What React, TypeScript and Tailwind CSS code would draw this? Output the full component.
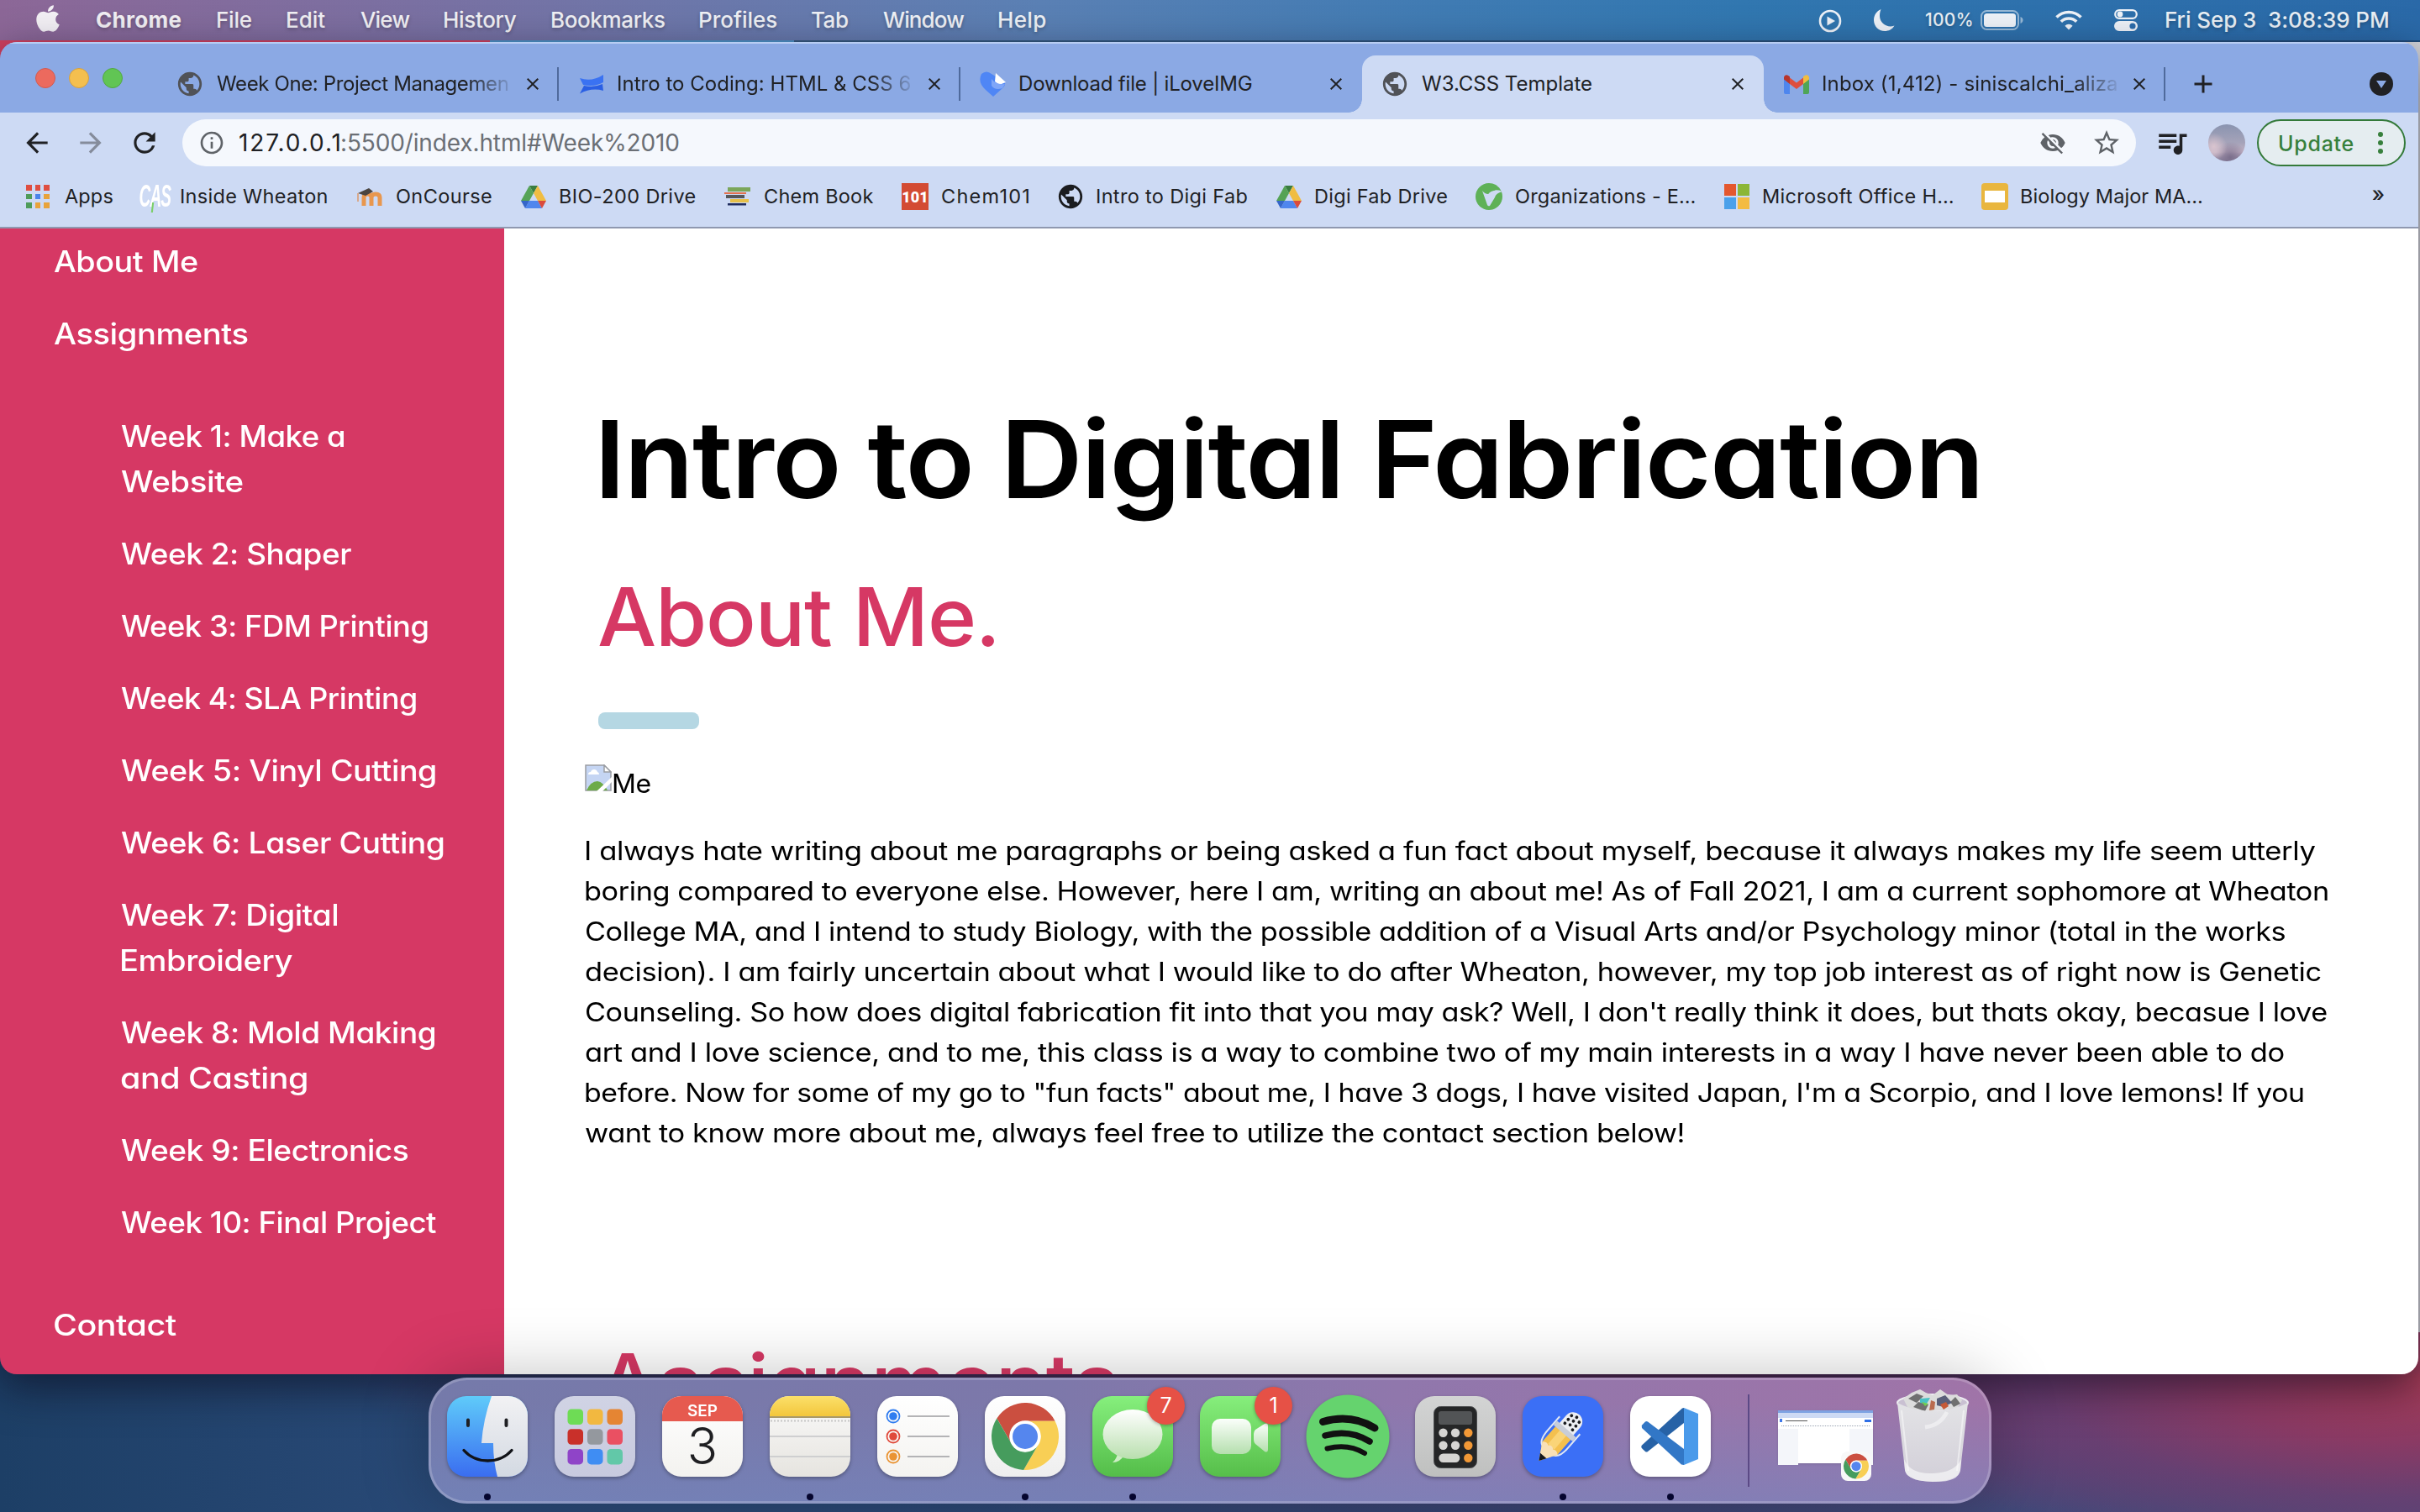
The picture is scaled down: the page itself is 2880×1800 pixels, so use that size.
import { useLayoutEffect, useRef, useState, type ReactNode } from "react";
import { FaApple } from "react-icons/fa";
import {
  MdPublic,
  MdClose,
  MdArrowBack,
  MdArrowForward,
  MdRefresh,
  MdInfoOutline,
  MdVisibilityOff,
  MdStarBorder,
  MdQueueMusic,
  MdAdd,
} from "react-icons/md";

/*
 * One line of text whose ink spans exactly `w` pixels: by tracking,
 * or, with `wide`, by stretching the letters themselves.
 */
function Fit({ children, w, wide = false, className = "" }: { children: string; w: number; wide?: boolean; className?: string }) {
  const ref = useRef<HTMLSpanElement>(null);
  const [fit, setFit] = useState({ spacing: 0, left: 0, scale: 1 });
  useLayoutEffect(() => {
    const el = ref.current;
    if (!el) return;
    const cs = getComputedStyle(el);
    const ctx = document.createElement("canvas").getContext("2d");
    if (!ctx) return;
    ctx.font = `${cs.fontWeight} ${cs.fontSize} ${cs.fontFamily}`;
    const m = ctx.measureText(children);
    const lsb = -m.actualBoundingBoxLeft;
    const rsb = m.width - m.actualBoundingBoxRight;
    el.style.letterSpacing = "0px";
    const natural = el.offsetWidth;
    const gaps = Math.max(1, children.length - 1);
    const ink = natural - lsb - rsb;
    if (wide) {
      const spacing = -0.012 * parseFloat(cs.fontSize);
      const scale = w / (ink + spacing * gaps);
      el.style.letterSpacing = `${spacing}px`;
      setFit({ spacing, left: -lsb * scale, scale });
    } else {
      const spacing = (w - ink) / gaps;
      el.style.letterSpacing = `${spacing}px`;
      setFit({ spacing, left: -lsb, scale: 1 });
    }
  }, [children, w, wide]);
  return (
    <span className={`block shrink-0 whitespace-pre ${className}`} style={{ width: w }}>
      <span
        ref={ref}
        className="inline-block origin-left"
        style={{
          letterSpacing: fit.spacing,
          marginLeft: fit.left,
          transform: fit.scale === 1 ? undefined : `scaleX(${fit.scale})`,
        }}
      >
        {children}
      </span>
    </span>
  );
}

/* ---------- Menu bar ---------- */

const menus: [string, number][] = [
  ["File", 41],
  ["Edit", 45],
  ["View", 58],
  ["History", 86],
  ["Bookmarks", 134],
  ["Profiles", 91],
  ["Tab", 43],
  ["Window", 96],
  ["Help", 55],
];

function MenuBar() {
  return (
    <header className="flex h-12 shrink-0 items-center bg-[linear-gradient(90deg,#8c6797_0%,#7a70a2_17%,#5a80b4_43%,#3f7bb3_60%,#3177b0_72%,#2a69a8_100%)] pl-[43px] pr-[38px] text-[26px] leading-[48px] text-white/90 [text-shadow:0_2px_4px_rgba(0,0,0,0.25)]">
      <FaApple className="-mt-1 h-[36px] w-[28px]" preserveAspectRatio="none" />
      <Fit w={101} className="ml-11 font-bold">Chrome</Fit>
      <nav className="ml-[43px] flex gap-[42px] font-medium">
        {menus.map(([t, w]) => (
          <Fit key={t} w={w}>{t}</Fit>
        ))}
      </nav>
      <div className="ml-auto flex items-center">
        <svg className="mt-0.5 h-7 w-7" viewBox="0 0 28 28" fill="none">
          <circle cx="14" cy="14" r="12" stroke="#eef2f8" strokeWidth="2.6" />
          <path d="M10.500 8.500V19.500L20 14Z" fill="#eef2f8" />
        </svg>
        <svg className="ml-[37px] h-7 w-[26px]" viewBox="0 0 26 28">
          <path d="M9.500 1C7 7 7.500 14 12 18c4 3.600 9 4.300 13.500 2.500C23 25 18.500 27 14 27 6.500 27 1 21 1 14 1 8 4.500 3 9.500 1Z" fill="#eef2f8" />
        </svg>
        <Fit w={56} className="ml-[36px] text-[21px] font-medium">100%</Fit>
        <svg className="ml-2.5 h-6 w-[51px]" viewBox="0 0 51 24" fill="none">
          <rect x="1" y="1" width="44" height="22" rx="6.500" stroke="#fff" strokeOpacity=".5" strokeWidth="2" />
          <rect x="4" y="4" width="38" height="16" rx="3.500" fill="#eef2f8" />
          <path d="M47.500 8c2 .8 3 2.200 3 4s-1 3.200-3 4Z" fill="#fff" fillOpacity=".5" />
        </svg>
        <svg className="ml-[38px] h-6 w-8" viewBox="0 0 32 24" fill="none" stroke="#eef2f8">
          <path d="M1.500 8.500a20.500 20.500 0 0 1 29 0" strokeWidth="3.600" />
          <path d="M6.800 13.800a13 13 0 0 1 18.400 0" strokeWidth="3.600" />
          <path d="M16 23.500l-4.600-4.800a6.500 6.500 0 0 1 9.200 0Z" fill="#eef2f8" stroke="none" />
        </svg>
        <svg className="ml-[38px] h-7 w-7" viewBox="0 0 28 28" fill="none">
          <rect x="1.200" y="2.200" width="25.600" height="9.600" rx="4.800" stroke="#eef2f8" strokeWidth="2.200" />
          <circle cx="7" cy="7" r="3.400" fill="#eef2f8" />
          <rect y="15" width="28" height="12" rx="6" fill="#eef2f8" />
          <circle cx="22" cy="21" r="3.600" fill="#2c6cab" />
        </svg>
        <Fit w={264} className="-mt-px ml-[34px] font-medium">{"Fri Sep 3  3:08:39 PM"}</Fit>
      </div>
    </header>
  );
}

/* ---------- Tab strip ---------- */

function DownloadIcon() {
  return (
    <svg className="h-[30px] w-8" viewBox="0 0 32 30">
      <path d="M2 3Q8-2 14 3L30 13Q31 17 26 21L16 30 7 22Q-3 13 2 3Z" fill="#4f86f5" />
      <path d="M19 2l12 11-8 3-5-4Z" fill="#fff" />
      <path d="M14 9q5 7 16 6l-3 5q-9 3-13-3Z" fill="#7fa6f8" />
    </svg>
  );
}

function ConfluenceIcon() {
  return (
    <svg className="h-[23px] w-7" viewBox="0 0 28 23">
      <path d="M0 4Q14 9 28 0V9Q17 15 4 12Z" fill="#3a72f2" />
      <path d="M5 13Q17 15.500 27 11L28 19Q14 15 0 22.500Z" fill="#2a5fe4" />
    </svg>
  );
}

function GmailIcon() {
  return (
    <svg className="h-[23px] w-[30px]" viewBox="0 0 30 23">
      <path d="M0 5v16a2 2 0 0 0 2 2h5V10Z" fill="#4e86ee" />
      <path d="M30 5v16a2 2 0 0 1-2 2h-5V10Z" fill="#4fa557" />
      <path d="M7 3.500l8 6 8-6V11l-8 6-8-6Z" fill="#de4e3e" />
      <path d="M0 3.500C0 .5 3-.8 5.300 1L7 2.300V11L0 5.500Z" fill="#b8352b" />
      <path d="M30 3.500C30 .5 27-.8 24.700 1L23 2.300V11l7-5.500Z" fill="#f1bd41" />
    </svg>
  );
}

type TabInfo = { title: string; w: number; icon: ReactNode; active?: boolean; divider?: boolean };

const tabs: TabInfo[] = [
  { title: "Week One: Project Managemen", w: 347, icon: <MdPublic className="size-[34px] text-[#505257]" />, divider: true },
  { title: "Intro to Coding: HTML & CSS 6", w: 348, icon: <ConfluenceIcon />, divider: true },
  { title: "Download file | iLoveIMG", w: 276, icon: <DownloadIcon /> },
  { title: "W3.CSS Template", w: 202, icon: <MdPublic className="size-[34px] text-[#505257]" />, active: true },
  { title: "Inbox (1,412) - siniscalchi_aliza", w: 349, icon: <GmailIcon />, divider: true },
];

function Tab({ tab }: { tab: TabInfo }) {
  return (
    <div
      className={`relative flex h-[68px] w-[478px] items-center pl-[25px] ${
        tab.active ? "rounded-t-[16px] bg-[#cddaf4]" : ""
      }`}
    >
      {tab.active && (
        <>
          <span className="absolute bottom-0 -left-4 size-4 bg-[radial-gradient(circle_at_0_0,transparent_15.500px,#cddaf4_16px)]" />
          <span className="absolute bottom-0 -right-4 size-4 bg-[radial-gradient(circle_at_100%_0,transparent_15.500px,#cddaf4_16px)]" />
        </>
      )}
      <span className="flex w-7 items-center justify-center [&>svg]:shrink-0">{tab.icon}</span>
      <div
        className={`ml-[18px] w-[352px] ${
          tab.w > 300 ? "[mask-image:linear-gradient(90deg,#000_85%,transparent_101%)]" : ""
        }`}
      >
        <Fit w={tab.w} className="text-[24px] leading-9 text-[#202124]">{tab.title}</Fit>
      </div>
      <MdClose className="ml-3 size-6 text-[#202124]" />
      {tab.divider && <span className="ml-auto h-10 w-0.5 bg-[#4f6a9c]" />}
    </div>
  );
}

function TabStrip() {
  return (
    <div className="flex h-[84px] shrink-0 items-end border-t-2 border-[#b8cdf2] bg-[#8ba9e4] pl-[42px]">
      <div className="flex h-[82px] w-[145px] gap-4 pt-[29px]">
        <span className="size-6 rounded-full border border-[#d05a50] bg-[#ec6a5e]" />
        <span className="size-6 rounded-full border border-[#d6a13f] bg-[#f4bf4f]" />
        <span className="size-6 rounded-full border border-[#52a842] bg-[#61c554]" />
      </div>
      {tabs.map((t) => (
        <Tab key={t.title} tab={t} />
      ))}
      <div className="flex h-[68px] grow items-center justify-between pl-[27px] pr-[30px]">
        <MdAdd className="size-9 text-[#202124]" />
        <svg className="size-7" viewBox="0 0 28 28">
          <circle cx="14" cy="14" r="14" fill="#202124" />
          <path d="M8 10h12l-6 9Z" fill="#8ba9e4" />
        </svg>
      </div>
    </div>
  );
}

/* ---------- Toolbar ---------- */

function Toolbar() {
  return (
    <div className="flex h-[72px] shrink-0 items-center bg-[#cddaf4] pl-[25px] pr-[15px]">
      <MdArrowBack className="size-[38px] text-[#202124]" />
      <MdArrowForward className="ml-[26px] size-[38px] text-[#858c9b]" />
      <MdRefresh className="ml-[26px] size-[38px] text-[#202124]" />
      <div className="ml-[26px] flex h-14 w-[2325px] items-center rounded-full bg-[#f5f8fd] pl-[19px] pr-[17px] text-[28px]">
        <MdInfoOutline className="size-8 text-[#5f6368]" />
        <Fit w={118} className="ml-[17px] text-[#202124]">127.0.0.1</Fit>
        <Fit w={400} className="ml-1 text-[#6b6f75]">:5500/index.html#Week%2010</Fit>
        <MdVisibilityOff className="ml-auto size-8 text-[#5f6368]" />
        <MdStarBorder className="ml-[30px] size-[36px] text-[#5f6368]" />
      </div>
      <MdQueueMusic className="ml-[22px] size-[42px] text-[#202124]" />
      <span className="ml-[22px] size-11 rounded-full bg-[radial-gradient(circle_at_15%_60%,#d9c4cf_0,transparent_35%),radial-gradient(circle_at_60%_90%,#7b6f8c_0,transparent_40%),linear-gradient(180deg,#8a94b0_0%,#a5a3b9_50%,#c3b2c4_75%,#857c98_100%)]" />
      <div className="ml-3.5 flex h-14 w-[177px] items-center rounded-full border-2 border-[#347a3a] bg-[#e5edf0] pl-[25px]">
        <Fit w={88} className="mt-0.5 text-[25px] font-medium leading-none text-[#37803c]">Update</Fit>
        <span className="ml-[29px] flex flex-col gap-1">
          <i className="size-1.5 rounded-full bg-[#37803c]" />
          <i className="size-1.5 rounded-full bg-[#37803c]" />
          <i className="size-1.5 rounded-full bg-[#37803c]" />
        </span>
      </div>
    </div>
  );
}

/* ---------- Bookmarks ---------- */

const appColors = ["#df4e41", "#df4e41", "#df4e41", "#4f9c5a", "#4a84ea", "#e8a33b", "#4f9c5a", "#e8a33b", "#e8a33b"];

function AppsIcon() {
  return (
    <span className="grid grid-cols-3 gap-x-1 gap-y-1">
      {appColors.map((c, i) => (
        <i key={i} className="size-[6.500px]" style={{ background: c }} />
      ))}
    </span>
  );
}

function DriveIcon() {
  return (
    <svg className="h-[27px] w-[30px]" viewBox="0 0 30 27">
      <path d="M10 0h10l-5 9Z" fill="#3a7d3f" />
      <path d="M10 0l5 9-5 9H0Z" fill="#55a356" />
      <path d="M20 0l10 18H20L15 9Z" fill="#f0bd42" />
      <path d="M10 18h10l5 9H5Z" fill="#4f86ee" />
      <path d="M0 18h10l-5 9Z" fill="#3566c9" />
      <path d="M20 18h10l-5 9Z" fill="#da4b3c" />
    </svg>
  );
}

function BooksIcon() {
  return (
    <svg className="h-[22px] w-8" viewBox="0 0 32 22">
      <path d="M4 0h27v5H4Z" fill="#7ba65a" />
      <path d="M0 6h26v2H0Z" fill="#e2714e" />
      <path d="M2 9h22v4H2Z" fill="#55575a" />
      <path d="M7 14h22v4H7Z" fill="#e6c04a" />
      <path d="M4 19h22v2.500H4Z" fill="#1f2c5e" />
    </svg>
  );
}

function MoodleIcon() {
  return (
    <svg className="h-6 w-8" viewBox="0 0 32 24" fill="none">
      <path d="M9 23V13q0-4 4.500-4t4.500 4v10M18 13q0-4 5-4t5 4v10" stroke="#e8974e" strokeWidth="5" />
      <path d="M2 8L15 2l5 4-9 5Z" fill="#4a4541" />
      <path d="M2 8v10" stroke="#d8a98c" strokeWidth="2" />
    </svg>
  );
}

function LeafIcon() {
  return (
    <svg className="size-8" viewBox="0 0 32 32">
      <circle cx="16" cy="16" r="16" fill="#5eb157" />
      <path d="M8 9q3 4 7 4 2-4 12-5l5 2q-8 2-9 7l-6 10q-2 1-3-1Z" fill="#cddaf4" />
      <path d="M14 12q5-7 14-5" fill="none" stroke="#5eb157" strokeWidth="3" />
    </svg>
  );
}

function MicrosoftIcon() {
  return (
    <span className="grid grid-cols-2 gap-0.5">
      <i className="size-3.5 bg-[#e4572e]" />
      <i className="size-3.5 bg-[#8bb637]" />
      <i className="size-3.5 bg-[#4aa0ea]" />
      <i className="size-3.5 bg-[#f3bb42]" />
    </span>
  );
}

const bookmarks: { label: string; w: number; icon: ReactNode }[] = [
  { label: "Apps", w: 57, icon: <AppsIcon /> },
  {
    label: "Inside Wheaton",
    w: 174,
    icon: (
      <span className="relative block scale-x-[0.530] font-[Liberation_Sans] text-[36px] font-bold italic tracking-tighter text-white">
        CAS
        <i className="absolute bottom-2 left-7 h-3 w-1 -skew-x-12 bg-[#7ccf6a]" />
      </span>
    ),
  },
  { label: "OnCourse", w: 113, icon: <MoodleIcon /> },
  { label: "BIO-200 Drive", w: 161, icon: <DriveIcon /> },
  { label: "Chem Book", w: 129, icon: <BooksIcon /> },
  {
    label: "Chem101",
    w: 103,
    icon: <span className="flex size-8 items-center justify-center bg-[#d34b33] font-[Roboto] text-[18px] font-black text-white">101</span>,
  },
  { label: "Intro to Digi Fab", w: 178, icon: <MdPublic className="size-[34px] text-[#1b1c1f]" /> },
  { label: "Digi Fab Drive", w: 156, icon: <DriveIcon /> },
  { label: "Organizations - E…", w: 213, icon: <LeafIcon /> },
  { label: "Microsoft Office H…", w: 225, icon: <MicrosoftIcon /> },
  {
    label: "Biology Major MA…",
    w: 215,
    icon: (
      <span className="flex size-8 items-center justify-center rounded-[4px] bg-[#e9b63e]">
        <i className="h-3.5 w-6 bg-white" />
      </span>
    ),
  },
];

function BookmarksBar() {
  return (
    <div className="flex h-[66px] shrink-0 items-center gap-[34px] border-b-2 border-[#8f98b0] bg-[#cddaf4] pb-2 pl-[29px] pr-10 text-[23.500px] text-[#202124]">
      {bookmarks.map((b) => (
        <div key={b.label} className="flex shrink-0 items-center gap-4">
          <span className="flex size-8 shrink-0 items-center justify-center [&>*]:shrink-0">{b.icon}</span>
          <Fit w={b.w} className="leading-8">{b.label}</Fit>
        </div>
      ))}
      <span className="ml-auto -mt-1 text-[25px] font-medium">»</span>
    </div>
  );
}

/* ---------- Web page ---------- */

const weeks: [string, number][][] = [
  [["Week 1: Make a", 266], ["Website", 144]],
  [["Week 2: Shaper", 274]],
  [["Week 3: FDM Printing", 365]],
  [["Week 4: SLA Printing", 352]],
  [["Week 5: Vinyl Cutting", 375]],
  [["Week 6: Laser Cutting", 384]],
  [["Week 7: Digital", 258], ["Embroidery", 204]],
  [["Week 8: Mold Making", 374], ["and Casting", 221]],
  [["Week 9: Electronics", 342]],
  [["Week 10: Final Project", 376]],
];

function Sidebar() {
  return (
    <aside className="flex w-[600px] shrink-0 flex-col bg-[#d63864] pl-16 pt-3 text-[35px] font-medium leading-[54px] text-white">
      <Fit wide w={170}>About Me</Fit>
      <Fit wide w={231} className="mt-8">Assignments</Fit>
      <ul className="my-[68px] flex flex-col gap-8 pl-20">
        {weeks.map((lines) => (
          <li key={lines[0][0]}>
            {lines.map(([t, w]) => (
              <Fit wide key={t} w={w}>{t}</Fit>
            ))}
          </li>
        ))}
      </ul>
      <Fit wide w={146}>Contact</Fit>
    </aside>
  );
}

const paragraph: [string, number][] = [
  ["I always hate writing about me paragraphs or being asked a fun fact about myself, because it always makes my life seem utterly", 2058],
  ["boring compared to everyone else. However, here I am, writing an about me! As of Fall 2021, I am a current sophomore at Wheaton", 2073],
  ["College MA, and I intend to study Biology, with the possible addition of a Visual Arts and/or Psychology minor (total in the works", 2022],
  ["decision). I am fairly uncertain about what I would like to do after Wheaton, however, my top job interest as of right now is Genetic", 2065],
  ["Counseling. So how does digital fabrication fit into that you may ask? Well, I don't really think it does, but thats okay, becasue I love", 2072],
  ["art and I love science, and to me, this class is a way to combine two of my main interests in a way I have never been able to do", 2020],
  ["before. Now for some of my go to \"fun facts\" about me, I have 3 dogs, I have visited Japan, I'm a Scorpio, and I love lemons! If you", 2043],
  ["want to know more about me, always feel free to utilize the contact section below!", 1306],
];

function BrokenImage() {
  return (
    <svg className="mt-0.5 h-8 w-8" viewBox="0 0 32 32">
      <path d="M1 1H23L31 9V31H1Z" fill="#c5d5f3" stroke="#9a9da3" strokeWidth="1.500" />
      <path d="M23 1V9H31Z" fill="#fff" stroke="#9a9da3" strokeWidth="1.500" />
      <path d="M4 12q0-3 3-3 1-3 4-3t4 3q2 .5 2 3Z" fill="#fff" />
      <path d="M2 31q5-11 13-11 7 1 12 11Z" fill="#6dab48" />
      <path d="M14 32L32 15v6L21 32Z" fill="#fff" />
    </svg>
  );
}

function Page() {
  return (
    <main className="flex min-w-0 grow flex-col bg-white pl-24 pt-[179px] text-black">
      <h1 className="pl-[21px] text-[128px] font-semibold leading-[192px]">
        <Fit wide w={1636}>Intro to Digital Fabrication</Fit>
      </h1>
      <h2 className="mt-[19px] pl-[17px] text-[96px] font-medium leading-[144px] text-[#d63864]">
        <Fit wide w={471}>About Me.</Fit>
      </h2>
      <div className="ml-4 mt-[42px] h-5 w-[120px] rounded-[8px] bg-[#b5d7e3]" />
      <div className="mt-10 flex h-12 text-[31px] leading-[48px]">
        <BrokenImage />
        <Fit wide w={44} className="ml-0.5 mt-px">Me</Fit>
      </div>
      <div className="mt-[33px] pl-px text-[31px] leading-[48px]">
        {paragraph.map(([t, w]) => (
          <Fit wide key={t} w={w}>{t}</Fit>
        ))}
      </div>
      <h2 className="mt-[201px] h-[62px] pl-[17px] text-[96px] font-medium leading-[144px] text-[#d63864]">
        <Fit wide w={615}>Assignments</Fit>
      </h2>
    </main>
  );
}

/* ---------- Dock ---------- */

function Tile({ fill, children }: { fill: string; children?: ReactNode }) {
  const clip = `tile-${fill.replace(/[^a-z0-9]/gi, "")}`;
  return (
    <svg className="size-24 drop-shadow-[0_2px_2px_rgba(0,0,0,0.3)]" viewBox="0 0 96 96">
      <clipPath id={clip}>
        <rect width="96" height="96" rx="23" />
      </clipPath>
      <g clipPath={`url(#${clip})`}>
        <rect width="96" height="96" fill={fill} />
        {children}
      </g>
    </svg>
  );
}

function Gradients() {
  const list: [string, string, string][] = [
    ["gFinderL", "#5fcbfa", "#3a6df0"],
    ["gFinderR", "#f2f2f4", "#d3d9e2"],
    ["gLaunch", "#d0d3e4", "#c8cadf"],
    ["gCal", "#ffffff", "#f3f2ef"],
    ["gNotes", "#fafafa", "#e6e4df"],
    ["gYellow", "#fbe06a", "#f3c63c"],
    ["gRem", "#ffffff", "#f4f3f0"],
    ["gChrome", "#ffffff", "#eeeeee"],
    ["gMsg", "#86ef7d", "#54bd49"],
    ["gFace", "#86ee7c", "#56be4a"],
    ["gBubble", "#ffffff", "#b9dfae"],
    ["gCam", "#fbfffb", "#b5dfae"],
    ["gCalc", "#d3d4d4", "#bfc0bf"],
    ["gBin", "#e3e3e6", "#d2cfd8"],
  ];
  return (
    <svg className="absolute size-0">
      <defs>
        {list.map(([id, a, b]) => (
          <linearGradient key={id} id={id} x1="0" y1="0" x2="0" y2="1">
            <stop stopColor={a} />
            <stop offset="1" stopColor={b} />
          </linearGradient>
        ))}
      </defs>
    </svg>
  );
}

function ChromeLogo() {
  return (
    <>
      <path d="M3.810 11.030A24 24 0 0 1 45.330 13H24A11 11 0 0 0 14.470 29.500Z" fill="#cb4f40" />
      <path d="M24 13H45.330A24 24 0 0 1 22.860 47.970L33.530 29.500A11 11 0 0 0 24 13Z" fill="#f8cf55" />
      <path d="M22.860 47.970A24 24 0 0 1 3.810 11.030L14.470 29.500A11 11 0 0 0 33.530 29.500Z" fill="#469c5d" />
      <circle cx="24" cy="24" r="11.200" fill="#fff" />
      <circle cx="24" cy="24" r="9" fill="#5586ee" />
    </>
  );
}

const launchColors = ["#6edc55", "#f2b840", "#e58533", "#c9302a", "#94989e", "#ea5062", "#8f44c8", "#3f8df3", "#62c8a8"];

function Finder() {
  return (
    <Tile fill="url(#gFinderL)">
      <path d="M53 0Q43 28 41 56H55Q55 78 60 96H96V0Z" fill="url(#gFinderR)" />
      <path d="M25 28.500v6.500M70.500 28.500v6.500" stroke="#1f2024" strokeWidth="4" strokeLinecap="round" />
      <path d="M20 64.500Q31 77 48.500 77T77 64.500" fill="none" stroke="#111318" strokeWidth="3.400" strokeLinecap="round" />
    </Tile>
  );
}

function Launchpad() {
  return (
    <Tile fill="url(#gLaunch)">
      {launchColors.map((c, i) => (
        <rect key={c} x={15.500 + (i % 3) * 23.500} y={15.500 + Math.floor(i / 3) * 23.700} width="18.500" height="18.500" rx="4.500" fill={c} />
      ))}
    </Tile>
  );
}

function Calendar() {
  return (
    <Tile fill="url(#gCal)">
      <rect width="96" height="30" fill="#e65a4f" />
      <text x="48" y="23.500" textAnchor="middle" fontSize="19" fontWeight="600" fill="#fff">SEP</text>
      <text x="48" y="81" textAnchor="middle" fontSize="60" fontWeight="300" fill="#1f1f22">3</text>
    </Tile>
  );
}

function Notes() {
  return (
    <Tile fill="url(#gNotes)">
      <rect width="96" height="24" fill="url(#gYellow)" />
      <path d="M0 25H96" stroke="#a99a6b" strokeWidth="2" />
      <path d="M1 29.500H96" stroke="#c6c6c6" strokeWidth="2" strokeDasharray="2 2" />
      <path d="M0 48H96M0 72H96" stroke="#cfcfd0" strokeWidth="2" />
    </Tile>
  );
}

function Reminders() {
  return (
    <Tile fill="url(#gRem)">
      {["#2f7cf0", "#e04a3b", "#ea9434"].map((c, i) => (
        <g key={c}>
          <circle cx="19" cy={24 + i * 24} r="7.500" fill="none" stroke={c} strokeWidth="1.800" />
          <circle cx="19" cy={24 + i * 24} r="4.800" fill={c} />
          <path d={`M36 ${24 + i * 24}H86`} stroke="#b4b4b6" strokeWidth="2" />
        </g>
      ))}
    </Tile>
  );
}

function Chrome() {
  return (
    <Tile fill="url(#gChrome)">
      <g transform="translate(8 8) scale(1.667)">
        <ChromeLogo />
      </g>
    </Tile>
  );
}

function Messages() {
  return (
    <Tile fill="url(#gMsg)">
      <path d="M30 64q1 9-6 15 9 0 14-9Z" fill="#cdeec5" />
      <ellipse cx="48" cy="45.500" rx="35.500" ry="29.500" fill="url(#gBubble)" />
    </Tile>
  );
}

function FaceTime() {
  return (
    <Tile fill="url(#gFace)">
      <rect x="14" y="27" width="47" height="42" rx="10" fill="url(#gCam)" />
      <path d="M64 45Q64 42 66 40L77 33Q81 31 81 36V63Q81 68 77 66L66 57Q64 55 64 52Z" fill="url(#gCam)" />
    </Tile>
  );
}

function Spotify() {
  return (
    <svg className="-mx-0.5 size-[100px] drop-shadow-[0_2px_2px_rgba(0,0,0,0.3)]" viewBox="0 0 100 100" fill="none" stroke="#111" strokeLinecap="round">
      <circle cx="50" cy="50" r="49.500" fill="#65d36e" stroke="none" />
      <path d="M20.500 32.500Q54 23 82 40" strokeWidth="9" />
      <path d="M23 49Q52 41 76 56" strokeWidth="7.500" />
      <path d="M25.500 64.500Q50 58 70 70" strokeWidth="6" />
    </svg>
  );
}

function Calculator() {
  return (
    <Tile fill="url(#gCalc)">
      <rect x="22.500" y="12.500" width="51" height="73" rx="8" fill="#252627" stroke="#4c4e50" />
      <rect x="28" y="18" width="40" height="16" rx="3" fill="#525456" />
      {[43.700, 58.700].map((y) => (
        <g key={y}>
          <circle cx="33.500" cy={y} r="5.200" fill="#d6d5d3" />
          <circle cx="48" cy={y} r="5.200" fill="#d6d5d3" />
          <circle cx="63.300" cy={y} r="5.200" fill="#f29836" />
        </g>
      ))}
      <rect x="28.300" y="68.600" width="25" height="10.400" rx="5.200" fill="#d6d5d3" />
      <circle cx="63.300" cy="73.800" r="5.200" fill="#f29836" />
    </Tile>
  );
}

function Notability() {
  return (
    <Tile fill="#3b6ff6">
      <g transform="translate(19.500 77) rotate(41)">
        <path d="M-16-30V-56M16-30V-56M-16-34Q-16-18-8-16M16-34Q16-18 8-16" stroke="#dfe6f4" strokeWidth="2" fill="none" />
        <path d="M0 0L-12-20V-44H12V-20Z" fill="#f4c04f" />
        <path d="M-5-22H5V-44H-5Z" fill="#fad477" />
        <path d="M0 0L-12-20Q-7-24-4-21 0-25 4-21 7-24 12-20Z" fill="#f8e0b7" />
        <path d="M0 0L-5-8H5Z" fill="#16171b" />
        <path d="M-11-49V-62A11 11 0 0 1 11-62V-49Z" fill="#eceef2" />
        {[-66, -60, -54].map((y) => (
          <g key={y} fill="#1a1b1f">
            <circle cx="-6" cy={y} r="1.900" />
            <circle cx="0" cy={y - 2.500} r="1.900" />
            <circle cx="6" cy={y} r="1.900" />
          </g>
        ))}
        <rect x="-15" y="-50" width="30" height="6.500" rx="1" fill="#c8cdd8" />
      </g>
    </Tile>
  );
}

function VSCode() {
  return (
    <Tile fill="#ffffff">
      <path d="M62 14.500L64 14V32L21 66Q19.500 67 18 66L13.800 62Q12.500 60 14 58.500Z" fill="#2762a6" />
      <path d="M14 38L13.700 35 18 30.500Q19.500 29.500 21 30.500L64 63V82L61 81.500Z" fill="#3277c6" />
      <path d="M64 14L81 21V75L64 82Z" fill="#4a9aea" />
    </Tile>
  );
}

function MiniWindow() {
  return (
    <span className="relative block h-[63px] w-[113px] bg-white shadow-sm">
      <i className="block h-[3px] bg-[#7ea2e2]" />
      <i className="block h-1.5 bg-[#cddaf4]" />
      <span className="flex items-center gap-1 px-0.5 pt-px">
        <i className="h-1 w-[3px] bg-[#3f79ea]" />
        <i className="h-px w-[26px] bg-[#555]" />
        <i className="ml-auto h-[3px] w-2 bg-[#2f6fe6]" />
      </span>
      <i className="mx-1 mt-1 block border-t border-dotted border-[#9aa3b2]" />
      <span className="mt-[3px] flex h-[43px] justify-between">
        <i className="w-6 bg-[#f4f6fa]" />
        <i className="w-7 bg-[#f4f6fa]" />
      </span>
      <svg className="absolute -bottom-[22px] left-[75px] size-[36px]" viewBox="0 0 36 36">
        <rect width="36" height="35" rx="8" fill="#f8f8f8" />
        <g transform="translate(3 2.500) scale(.625)">
          <ChromeLogo />
        </g>
      </svg>
    </span>
  );
}

function Trash() {
  return (
    <svg className="h-[112px] w-[86px]" viewBox="0 0 86 112">
      <ellipse cx="43" cy="17" rx="42" ry="10" fill="#c9c0d2" stroke="#efedf3" strokeWidth="2" />
      <path d="M8 12L18 5 28 1 35 5 43 8 52 1 62 8 72 7 78 14 72 24 40 27 14 24Z" fill="#dcdcdc" />
      <path d="M14 12l10-6 8 3-8 8ZM20 22l6-6 12 3-4 8ZM70 10l6 8-8 4-4-6Z" fill="#707070" />
      <path d="M28 12l12-1-4 7-8-1Z" fill="#49c1c4" />
      <path d="M30 16l8 2-4 3Z" fill="#6fce53" />
      <path d="M48 12l10-4 8 9-10 5-8-2Z" fill="#5a5f79" />
      <path d="M52 19l7-3 3 5-6 4Z" fill="#c45a38" />
      <path d="M41 14l5 2-1 9-6 1Z" fill="#b96b4e" />
      <path d="M1 17Q20 27 43 27T85 17L76 97Q74 110 43 111 12 110 10 97Z" fill="url(#gBin)" />
      <path d="M9 84L10 97Q12 110 43 111T76 97L77 84Q70 100 43 101T9 84Z" fill="#f4f4f6" opacity=".75" />
      <path d="M34 46Q52 44 60 28" fill="none" stroke="#f6f6f8" strokeWidth="5" opacity=".6" />
      <path d="M6 26L14 98M80 26L72 98" stroke="#fff" strokeWidth="2" opacity=".5" />
    </svg>
  );
}

const apps: { name: string; icon: ReactNode; open?: boolean; badge?: string }[] = [
  { name: "Finder", icon: <Finder />, open: true },
  { name: "Launchpad", icon: <Launchpad /> },
  { name: "Calendar", icon: <Calendar /> },
  { name: "Notes", icon: <Notes />, open: true },
  { name: "Reminders", icon: <Reminders /> },
  { name: "Chrome", icon: <Chrome />, open: true },
  { name: "Messages", icon: <Messages />, open: true, badge: "7" },
  { name: "FaceTime", icon: <FaceTime />, badge: "1" },
  { name: "Spotify", icon: <Spotify /> },
  { name: "Calculator", icon: <Calculator /> },
  { name: "Notability", icon: <Notability />, open: true },
  { name: "VSCode", icon: <VSCode />, open: true },
];

function Dock() {
  return (
    <div className="absolute bottom-2.5 left-[510px] flex h-[150px] w-[1860px] rounded-[46px] border-[3px] border-white/20 bg-[linear-gradient(180deg,transparent_20%,rgba(112,134,192,0.550)_100%),linear-gradient(90deg,#757aaa_0%,#7d78aa_40%,#9077ac_62%,#a074a8_100%)] bg-origin-border pl-[19px] shadow-[0_0_80px_rgba(0,0,0,0.260)]">
      <Gradients />
      <div className="flex gap-8 pt-[19px]">
        {apps.map((a) => (
          <div key={a.name} className="relative flex h-[124px] w-24 justify-center">
            <div className="flex h-24 items-center [&>svg]:shrink-0">{a.icon}</div>
            {a.badge && (
              <span className="absolute -right-3.5 -top-[11px] flex size-[45px] items-center justify-center rounded-full bg-[#e65146] text-[25px] text-white shadow-[0_1px_4px_rgba(0,0,0,0.350)]">
                {a.badge}
              </span>
            )}
            {a.open && <i className="absolute bottom-0 size-2 rounded-full bg-[#05052e]" />}
          </div>
        ))}
      </div>
      <span className="ml-11 mt-[17px] h-[110px] w-0.5 bg-[#5c4a86]" />
      <div className="ml-[34px] mt-[36px]">
        <MiniWindow />
      </div>
      <div className="ml-[28px] mt-2.5">
        <Trash />
      </div>
    </div>
  );
}

export default function App() {
  return (
    <div className="relative flex h-[1800px] w-[2880px] flex-col overflow-hidden bg-[radial-gradient(ellipse_700px_220px_at_2880px_1640px,#a83c57_0%,#8a3a64_35%,rgba(112,62,112,0.700)_65%,transparent_100%),radial-gradient(ellipse_1500px_190px_at_1900px_1630px,#6b3566_0%,#5a3f74_50%,transparent_100%),linear-gradient(90deg,#1d3f66_0%,#2a4a78_20%,#2d4572_60%,#3f4a7a_84%,#4b4778_100%)] font-[Inter,sans-serif]">
      <MenuBar />
      <div className="h-0.5 shrink-0 bg-[linear-gradient(90deg,#d0405f_0,#d0405f_583px,#4d93c8_583px,#4d93c8_945px,#35597f_945px,#1f4a78_100%)]" />
      <div className="relative shrink-0">
        <span className="absolute left-0 top-0 h-10 w-10 bg-[#d0405f]" />
        <span className="absolute right-0 top-0 h-[1536px] w-10 bg-[#d4d5d9]" />
        <section className="relative flex h-[1586px] w-[2878px] flex-col overflow-hidden rounded-[20px] shadow-[0_16px_50px_rgba(10,8,25,0.600)]">
          <TabStrip />
          <Toolbar />
          <BookmarksBar />
          <div className="flex min-h-0 grow [font-feature-settings:'cv11']">
            <Sidebar />
            <Page />
          </div>
        </section>
      </div>
      <Dock />
    </div>
  );
}
